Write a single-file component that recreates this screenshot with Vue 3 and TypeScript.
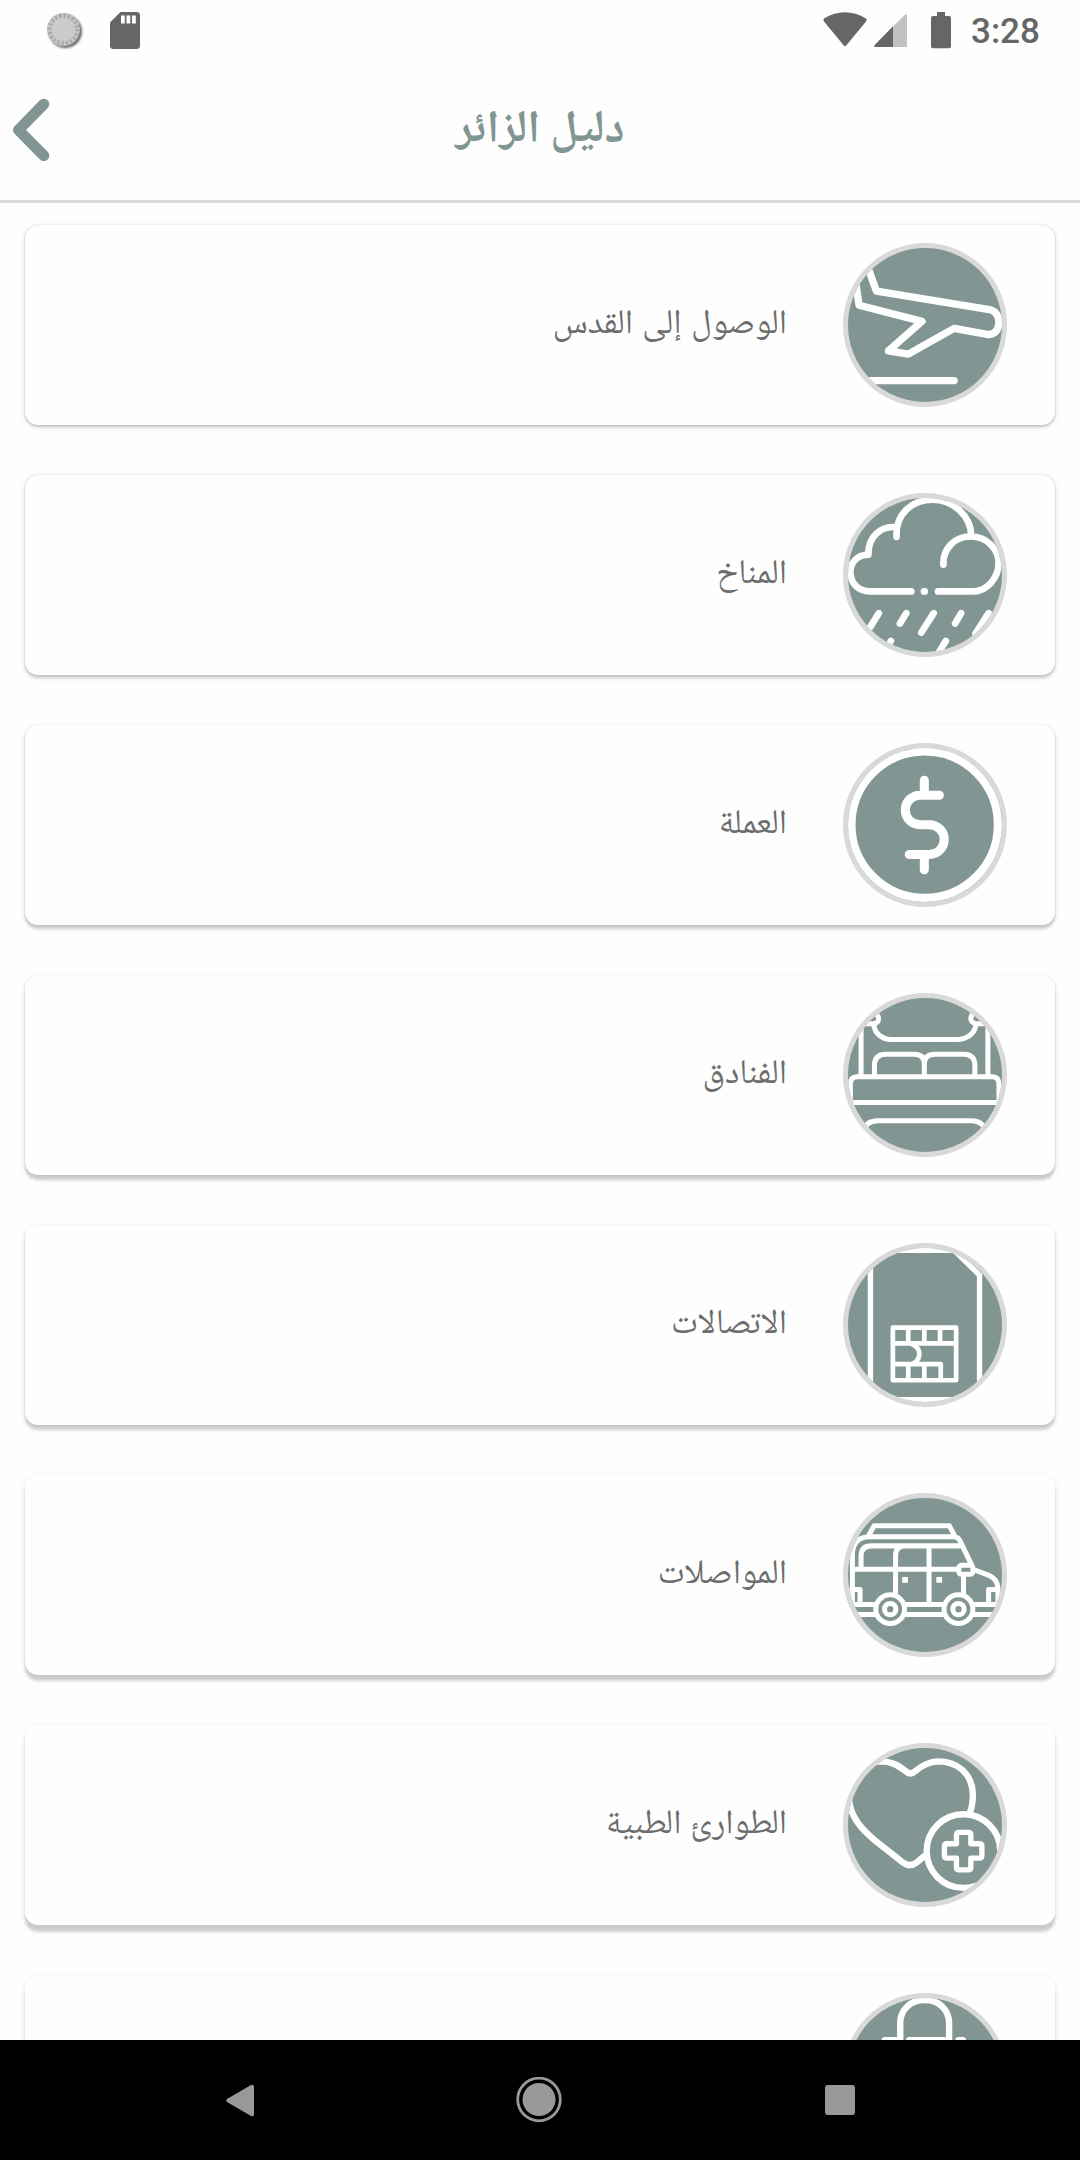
<script setup lang="ts">
interface GuideItem {
  key: string
  label: string
  viewBox: string
}

const items: GuideItem[] = [
  { key: 'arrival', label: 'الوصول إلى القدس', viewBox: '70 70 490 490' },
  { key: 'climate', label: 'المناخ', viewBox: '70 40 490 490' },
  { key: 'currency', label: 'العملة', viewBox: '70 40 490 490' },
  { key: 'hotels', label: 'الفنادق', viewBox: '70 40 490 490' },
  { key: 'telecom', label: 'الاتصالات', viewBox: '70 40 490 490' },
  { key: 'transport', label: 'المواصلات', viewBox: '70 40 490 490' },
  { key: 'medical', label: 'الطوارئ الطبية', viewBox: '70 40 490 490' },
  { key: 'shopping', label: '', viewBox: '190 130 490 490' },
]

function elevation(index: number) {
  const drop = 2 + index * 0.7
  const rim = Math.max(0.03, 0.2 - index * 0.03)
  return {
    boxShadow: `0 ${drop}px 3px rgba(0,0,0,.17), 0 2px 7px rgba(0,0,0,.08), 0 0 1.5px rgba(0,0,0,${rim})`,
  }
}
</script>

<template>
  <div class="screen" dir="ltr">
    <header class="status">
      <div class="status-left">
        <svg class="dial" width="40" height="42" viewBox="0 0 40 42">
          <circle cx="21.4" cy="21.400" r="16.600" fill="#6b6b6b" class="soft" />
          <circle cx="19.5" cy="19.500" r="16.500" fill="#c4c4c4" />
          <circle cx="19.5" cy="19.500" r="13.800" fill="none" stroke="#a2a2a2" stroke-width="4.4" stroke-dasharray="1.5 2.83" />
          <circle cx="19.5" cy="19.500" r="11.800" fill="#cbcbcb" />
        </svg>
        <svg class="sd" width="30" height="37" viewBox="0 0 30 37">
          <path d="M10.500 0H26.500Q30 0 30 3.500V33.500Q30 37 26.500 37H3.500Q0 37 0 33.500V10.500Z" fill="#666" />
          <path d="M11 3.500h3.800v8H11zM16.500 3.500h3.800v8h-3.800zM22 3.500h3.800v8H22z" fill="#fff" />
        </svg>
      </div>
      <div class="status-right">
        <svg width="44" height="35" viewBox="0 0 44 35">
          <path d="M1 6.500Q22-6 43 6.500Q44 8 43 9.500L23.200 33.600Q22 35 20.800 33.600L1 9.500Q0 8 1 6.500Z" fill="#666" />
        </svg>
        <svg class="signal" width="33" height="34" viewBox="0 0 33 34">
          <path d="M19 12.500 31 .8Q33-.5 33 2V33H19Z" fill="#c2c2c2" />
          <path d="M19 12.300V33H1.500Q-.8 33 .6 30.900Z" fill="#666" />
        </svg>
        <svg class="battery" width="20" height="37" viewBox="0 0 20 37">
          <path d="M6 0H14V4H18Q20 4 20 6V34Q20 36.300 18 36.300H2Q0 36.300 0 34V6Q0 4 2 4H6Z" fill="#666" />
        </svg>
        <span class="clock">3:28</span>
      </div>
    </header>

    <div class="titlebar">
      <svg class="back" width="40" height="68" viewBox="0 0 40 68">
        <path d="M33.800 8.200 8.500 34 33.800 59.600" fill="none" stroke="#819692" stroke-width="11" stroke-linecap="round" stroke-linejoin="round" />
      </svg>
      <h1 dir="rtl">دليل الزائر</h1>
    </div>

    <main class="list">
      <article v-for="(item, i) in items" :key="item.key" class="card" :style="elevation(i)">
        <span class="label" dir="rtl">{{ item.label }}</span>
        <div class="badge">
          <svg class="icon" :viewBox="item.viewBox">
            <g v-if="item.key === 'arrival'" stroke-width="22">
              <path d="M125 90 170 214 512 270Q536 278 536 308Q534 340 505 344L402 325 265 402 206 392 306 304 118 256 104 160" />
              <path d="M110 481H402" />
            </g>
            <g v-else-if="item.key === 'climate'" stroke-width="20">
              <path d="M230 171C226 102 277 60 338 60C400 60 452 110 453 166M227 142C180 138 144 174 146 224C113 224 92 248 92 276C92 310 116 334 150 334H274M370 254C368 205 405 169 452 170C500 170 535 208 535 248C535 296 498 334 460 334H354" />
              <path d="M312 334h2" />
              <path d="M177 399 144 452M259 399 240 430M341 399 304 457M423 399 405 430M505 399 466 460M213 482 202 502M377 482 354 520" />
            </g>
            <g v-else-if="item.key === 'currency'">
              <circle cx="314" cy="284" r="219" stroke-width="25" />
              <path stroke-width="27" d="M358 196H300A44 44 0 0 0 300 284H328A44 44 0 0 1 328 373H268M313 151V190M313 379V419" />
            </g>
            <g v-else-if="item.key === 'hotels'" stroke-width="15">
              <path d="M124 135V288M503 135V288M110 132H158Q178 132 176 113Q172 98 150 100M520 132H470Q450 130 452 113Q456 98 475 100M162 134C164 160 186 179 215 179H412C440 179 465 160 467 134" />
              <path d="M164 286V256Q164 223 198 223H282Q313 223 313 252V286M313 252Q313 223 345 223H430Q464 223 464 256V286" />
              <path d="M92 360V313Q92 290 112 290H516Q536 290 536 313V360M80 367H548M130 460Q134 422 175 422H455Q490 422 500 460" />
            </g>
            <g v-else-if="item.key === 'telecom'" stroke-width="16">
              <path d="M152 70V520M478 520V136L402 62H150M130 508H500" />
              <path stroke-width="14" d="M219 293H408V450H219ZM219 340H408M219 402H362V450M265 293V340M313 293V340M360 293V340M265 402V450M313 402V450M277 343Q298 352 298 371Q298 393 277 401" />
            </g>
            <g v-else-if="item.key === 'transport'" stroke-width="15">
              <path d="M148 165 163 138H388L402 165M98 390V225Q98 172 150 171H400Q416 171 422 188L455 256M124 264V228Q124 198 155 198H422M227 340V228Q227 198 253 198M327 198V370M98 268H412M430 290V340M464 270 506 286Q531 296 533 325V380" />
              <rect x="416" y="256" width="42" height="27" rx="8" />
              <path d="M95 328H121V370M530 328H505V370M80 373H168M254 373H374M458 373H550M90 403H168M254 403H374M458 403H545" />
              <circle cx="211" cy="387" r="43" /><circle cx="211" cy="387" r="17" />
              <circle cx="415" cy="387" r="43" /><circle cx="415" cy="387" r="17" />
              <path class="dot" d="M247 291h17v17h-17zM349 291h17v17h-17z" />
            </g>
            <g v-else-if="item.key === 'medical'" stroke-width="19">
              <path d="M450 246Q458 224 458 194C456 128 408 95 354 95C325 96 306 107 286 124Q272 138 257 124C231 104 212 95 184 95C125 97 94 145 88 205C90 263 132 302 162 328L248 396Q270 413 290 397L314 377" />
              <circle cx="430" cy="363" r="110" />
              <path stroke-width="16" d="M418 307H444Q452 307 452 315V341H477Q485 341 485 349V376Q485 384 477 384H452V411Q452 419 444 419H417Q409 419 409 411V384H381Q373 384 373 376V349Q373 341 381 341H409V315Q409 307 418 307Z" />
            </g>
            <g v-else stroke-width="19">
              <path d="M361 290V220C361 178 394 151 434 151C475 151 507 178 507 220V290M315 271H350M388 271H492M535 271H548" />
            </g>
          </svg>
        </div>
      </article>
    </main>

    <nav class="navbar">
      <svg class="nav-back" width="29" height="33" viewBox="0 0 29 33">
        <path d="M1 15 25 1Q28 0 28 3V30Q28 33 25 32L1 18Q-.5 16.500 1 15Z" fill="#999" />
      </svg>
      <svg class="nav-home" width="46" height="46" viewBox="0 0 46 46">
        <circle cx="23" cy="22.500" r="21.300" fill="none" stroke="#999" stroke-width="2.800" />
        <circle cx="23" cy="22.500" r="16.500" fill="#999" />
      </svg>
      <span class="nav-recent"></span>
    </nav>
  </div>
</template>

<style>
body {
  background: #fff;
}
</style>

<style scoped>
.screen {
  width: 1080px;
  height: 2160px;
  display: flex;
  flex-direction: column;
  overflow: hidden;
  background: #fefefe;
  font-family: "Noto Naskh Arabic UI", "Noto Naskh Arabic", "Noto Sans Arabic", "DejaVu Sans", sans-serif;
}
.status {
  height: 60px;
  flex: none;
  display: flex;
  justify-content: space-between;
  align-items: flex-start;
}
.status-left {
  display: flex;
  align-items: flex-start;
  gap: 26px;
  padding: 12px 0 0 44px;
}
.dial {
  margin-top: -2px;
}
.soft {
  filter: blur(1px);
}
.status-right {
  display: flex;
  align-items: flex-start;
  padding: 12px 40px 0 0;
}
.signal {
  margin: 2px 0 0 7px;
}
.battery {
  margin-left: 24px;
}
.clock {
  margin-left: 20px;
  width: 69px;
  font: 500 35px/40px Roboto, sans-serif;
  color: #666;
}
.titlebar {
  height: 140px;
  flex: none;
  display: grid;
  grid-template-columns: 60px 1fr 60px;
  align-items: center;
  border-bottom: 3px solid #d9d9d9;
}
.back {
  margin-left: 10px;
}
h1 {
  margin: 0;
  font-size: 45.5px;
  line-height: 60px;
  font-weight: 700;
  text-align: center;
  color: #819692;
}
.list {
  flex: 1;
  min-height: 0;
  overflow: hidden;
  display: flex;
  flex-direction: column;
  gap: 50px;
  padding: 22px 25px 0;
}
.card {
  flex: none;
  height: 200px;
  box-sizing: border-box;
  display: flex;
  justify-content: flex-end;
  align-items: center;
  gap: 56px;
  padding-right: 48px;
  border-radius: 13px;
  background: #fefefe;
}
.label {
  font-size: 34.6px;
  line-height: 50px;
  word-spacing: 1.5px;
  color: #6d6d6d;
  white-space: nowrap;
}
.badge {
  flex: none;
  width: 164px;
  height: 164px;
  box-sizing: border-box;
  border: 5px solid #d9d9d9;
  border-radius: 50%;
  background: #819692;
  overflow: hidden;
  display: flex;
}
.icon {
  flex: none;
  width: 164px;
  height: 164px;
  margin: -5px;
  fill: none;
  stroke: #fff;
  stroke-linecap: round;
  stroke-linejoin: round;
  filter: blur(0.5px);
}
.dot {
  fill: #fff;
  stroke: none;
}
.navbar {
  height: 120px;
  flex: none;
  background: #000;
  display: flex;
  align-items: center;
}
.nav-back {
  margin-left: 226px;
}
.nav-home {
  margin-left: 261px;
}
.nav-recent {
  width: 30px;
  height: 30px;
  margin-left: 263px;
  border-radius: 3px;
  background: #999;
}
</style>
